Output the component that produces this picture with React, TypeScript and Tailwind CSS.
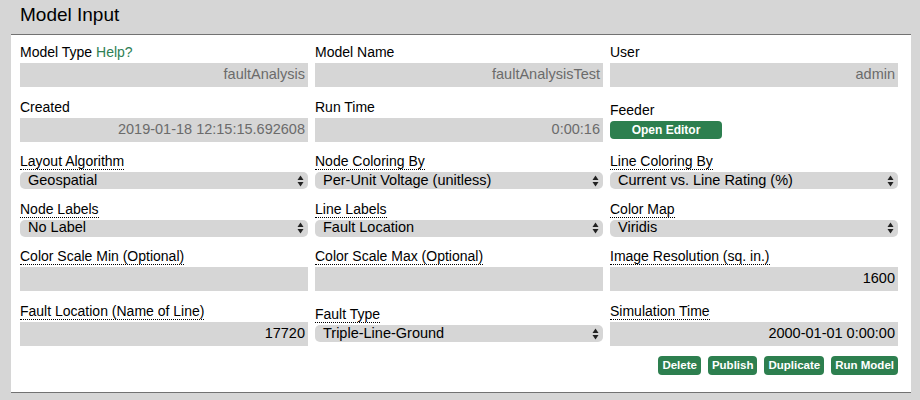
const Arrows = () => (
  <svg width="7" height="12" viewBox="0 0 7 12" className="shrink-0">
    <path d="M3.5 0.5 L6.5 5 L0.5 5 Z" fill="#222" />
    <path d="M3.5 11.5 L6.5 7 L0.5 7 Z" fill="#222" />
  </svg>
);

const Label = ({ children, dotted }: { children: React.ReactNode; dotted?: boolean }) => (
  <div className="h-[19px] leading-[17px]">
    <span className={dotted ? "inline-block border-b border-dotted border-black leading-[16px]" : ""}>{children}</span>
  </div>
);

const Field = ({ label, value, dark, dotted }: { label: React.ReactNode; value?: string; dark?: boolean; dotted?: boolean }) => (
  <div className="flex flex-col">
    <Label dotted={dotted}>{label}</Label>
    <div
      className={`h-[24px] bg-[#d6d6d6] flex items-center justify-end pr-[3px] text-[14.5px] ${dark ? "text-black" : "text-[#6b6b6b]"}`}
    >
      {value}
    </div>
  </div>
);

const Select = ({ label, value }: { label: string; value: string }) => (
  <div className="flex flex-col">
    <Label dotted>{label}</Label>
    <div className="h-[17px] bg-[#d6d6d6] rounded-[5px] flex items-center justify-between pl-[8px] pr-[4px] text-[14.5px] text-black">
      <span>{value}</span>
      <Arrows />
    </div>
  </div>
);

const Btn = ({ children }: { children: React.ReactNode }) => (
  <button className="h-[19px] px-[4px] rounded-[4px] bg-[#2d7f4f] text-white text-[11.5px] font-bold leading-[19px]">
    {children}
  </button>
);

export default function App() {
  return (
    <div className="w-[920px] h-[400px] bg-[#d6d6d6] font-['Liberation_Sans',Arial,sans-serif] text-[14px] text-black overflow-hidden">
      <div className="h-[34px] pl-[20px] pt-[3px] leading-[24px] text-[19px]">Model Input</div>
      <div className="ml-[11px] w-[900px] bg-white border-t border-b border-[#727272] pt-[9px] pb-[17px] pl-[9px] pr-[13px]">
        <div className="grid grid-cols-3 gap-x-[7px] gap-y-[11.5px] items-center">
          <Field
            label={
              <>
                Model Type <span className="text-[#2e8054]">Help?</span>
              </>
            }
            value="faultAnalysis"
          />
          <Field label="Model Name" value="faultAnalysisTest" />
          <Field label="User" value="admin" />

          <Field label="Created" value="2019-01-18 12:15:15.692608" />
          <Field label="Run Time" value="0:00:16" />
          <div className="flex flex-col">
            <Label>Feeder</Label>
            <div className="flex">
              <button className="w-[112px] h-[18px] rounded-[4px] bg-[#2d7f4f] text-white text-[12px] font-bold leading-[18px]">
                Open Editor
              </button>
            </div>
          </div>

          <Select label="Layout Algorithm" value="Geospatial" />
          <Select label="Node Coloring By" value="Per-Unit Voltage (unitless)" />
          <Select label="Line Coloring By" value="Current vs. Line Rating (%)" />

          <Select label="Node Labels" value="No Label" />
          <Select label="Line Labels" value="Fault Location" />
          <Select label="Color Map" value="Viridis" />

          <Field label="Color Scale Min (Optional)" dotted />
          <Field label="Color Scale Max (Optional)" dotted />
          <Field label="Image Resolution (sq. in.)" value="1600" dark dotted />

          <Field label="Fault Location (Name of Line)" value="17720" dark dotted />
          <Select label="Fault Type" value="Triple-Line-Ground" />
          <Field label="Simulation Time" value="2000-01-01 0:00:00" dark dotted />
        </div>
        <div className="flex justify-end gap-[7px] mt-[10px]">
          <Btn>Delete</Btn>
          <Btn>Publish</Btn>
          <Btn>Duplicate</Btn>
          <Btn>Run Model</Btn>
        </div>
      </div>
    </div>
  );
}
